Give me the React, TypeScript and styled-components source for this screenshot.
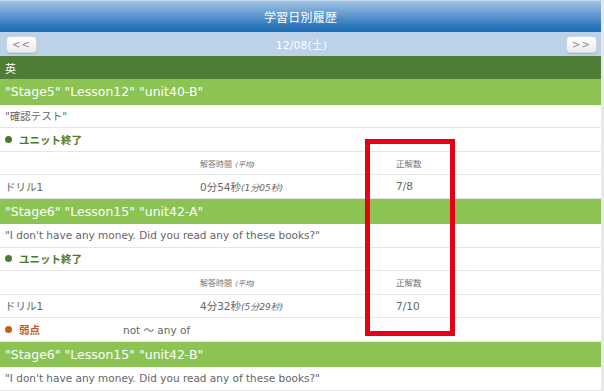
import styled, { createGlobalStyle } from 'styled-components';

const GlobalStyle = createGlobalStyle`
  html, body {
    margin: 0;
    padding: 0;
    background: #e9e9e9;
  }
  body {
    font-family: "DejaVu Sans", "Noto Sans CJK JP", sans-serif;
    color: #666;
  }
`;

const Page = styled.div`
  position: relative;
  width: 601px;
  background: #fff;
`;

const Header = styled.header`
  height: 32px;
  display: flex;
  align-items: center;
  justify-content: center;
  border-top: 1px solid #c4d8ee;
  box-sizing: border-box;
  background: linear-gradient(to bottom, #a3c4e6 0%, #5f98cf 45%, #2675bb 85%, #1d6db4 100%);
  color: #fff;
  font-size: 12px;
  letter-spacing: 0.2px;
`;

const NavBar = styled.nav`
  height: 24px;
  display: flex;
  align-items: center;
  justify-content: space-between;
  padding: 0 4px 0 6px;
  background: #bcd2e9;
`;

const NavButton = styled.button`
  width: 31px;
  height: 17px;
  padding: 0;
  border: 1px solid #d2d6da;
  border-radius: 4px;
  background: linear-gradient(to bottom, #ffffff, #ececec);
  box-shadow: 0 1px 1px rgba(0, 0, 0, 0.12);
  color: #8a8a8a;
  font-family: "DejaVu Sans", sans-serif;
  font-size: 10px;
  letter-spacing: 1px;
  line-height: 15px;
`;

const DateLabel = styled.span`
  color: #fff;
  font-size: 11px;
`;

const SubjectBar = styled.div`
  height: 23px;
  display: flex;
  align-items: center;
  padding-left: 5px;
  background: #507d35;
  color: #fff;
  font-size: 11px;
`;

const LessonBar = styled.div`
  height: 25.5px;
  display: flex;
  align-items: center;
  padding-left: 5px;
  background: #8bc452;
  color: #fff;
  font-size: 12.5px;
`;

const Row = styled.div`
  height: 22.5px;
  display: flex;
  align-items: center;
  padding-left: 5px;
  border-bottom: 1px solid #e6e6e6;
  font-size: 10.5px;
  color: #666;
  white-space: nowrap;
`;

const StatusLabel = styled.span<{ $tone: 'done' | 'weak' }>`
  display: flex;
  align-items: center;
  gap: 7px;
  width: 118px;
  font-weight: bold;
  font-size: 10.5px;
  color: ${({ $tone }) => ($tone === 'done' ? '#4b7a2c' : '#c0601c')};
  &::before {
    content: '';
    width: 7px;
    height: 7px;
    border-radius: 50%;
    background: currentColor;
  }
`;

const GridRow = styled(Row)`
  display: grid;
  grid-template-columns: 195px 196px 1fr;
  padding-left: 0;
  & > span {
    padding-left: 5px;
  }
`;

const HeadCell = styled.span<{ $size?: number }>`
  font-size: ${({ $size }) => $size ?? 8}px;
  color: #777;
`;

const Note = styled.i<{ $size: number }>`
  font-size: ${({ $size }) => $size}px;
`;

const Marker = styled.div`
  position: absolute;
  left: 365px;
  top: 139px;
  width: 90px;
  height: 197px;
  box-sizing: border-box;
  border: 5px solid #e60014;
  pointer-events: none;
`;

type Drill = { name: string; time: string; avg: string; score: string };
type Lesson = {
  title: string;
  quote: string;
  drills?: Drill[];
  weak?: string;
};

const lessons: Lesson[] = [
  {
    title: '"Stage5" "Lesson12" "unit40-B"',
    quote: '"確認テスト"',
    drills: [{ name: 'ドリル1', time: '0分54秒', avg: '(1分05秒)', score: '7/8' }],
  },
  {
    title: '"Stage6" "Lesson15" "unit42-A"',
    quote: '"I don\'t have any money. Did you read any of these books?"',
    drills: [{ name: 'ドリル1', time: '4分32秒', avg: '(5分29秒)', score: '7/10' }],
    weak: 'not ～ any of',
  },
  {
    title: '"Stage6" "Lesson15" "unit42-B"',
    quote: '"I don\'t have any money. Did you read any of these books?"',
  },
];

export default function App() {
  return (
    <Page>
      <GlobalStyle />
      <Header>学習日別履歴</Header>
      <NavBar>
        <NavButton>&lt;&lt;</NavButton>
        <DateLabel>12/08(土)</DateLabel>
        <NavButton>&gt;&gt;</NavButton>
      </NavBar>
      <SubjectBar>英</SubjectBar>
      {lessons.map((lesson, i) => (
        <section key={i}>
          <LessonBar>{lesson.title}</LessonBar>
          <Row>{lesson.quote}</Row>
          {lesson.drills && (
            <>
              <Row>
                <StatusLabel $tone="done">ユニット終了</StatusLabel>
              </Row>
              <GridRow>
                <span />
                <span>
                  <HeadCell>解答時間</HeadCell> <Note $size={7}>(平均)</Note>
                </span>
                <span>
                  <HeadCell $size={8.5}>正解数</HeadCell>
                </span>
              </GridRow>
              {lesson.drills.map((d) => (
                <GridRow key={d.name}>
                  <span>{d.name}</span>
                  <span>
                    {d.time}
                    <Note $size={9}>{d.avg}</Note>
                  </span>
                  <span>{d.score}</span>
                </GridRow>
              ))}
            </>
          )}
          {lesson.weak && (
            <Row>
              <StatusLabel $tone="weak">弱点</StatusLabel>
              <span>{lesson.weak}</span>
            </Row>
          )}
        </section>
      ))}
      <Marker />
    </Page>
  );
}
